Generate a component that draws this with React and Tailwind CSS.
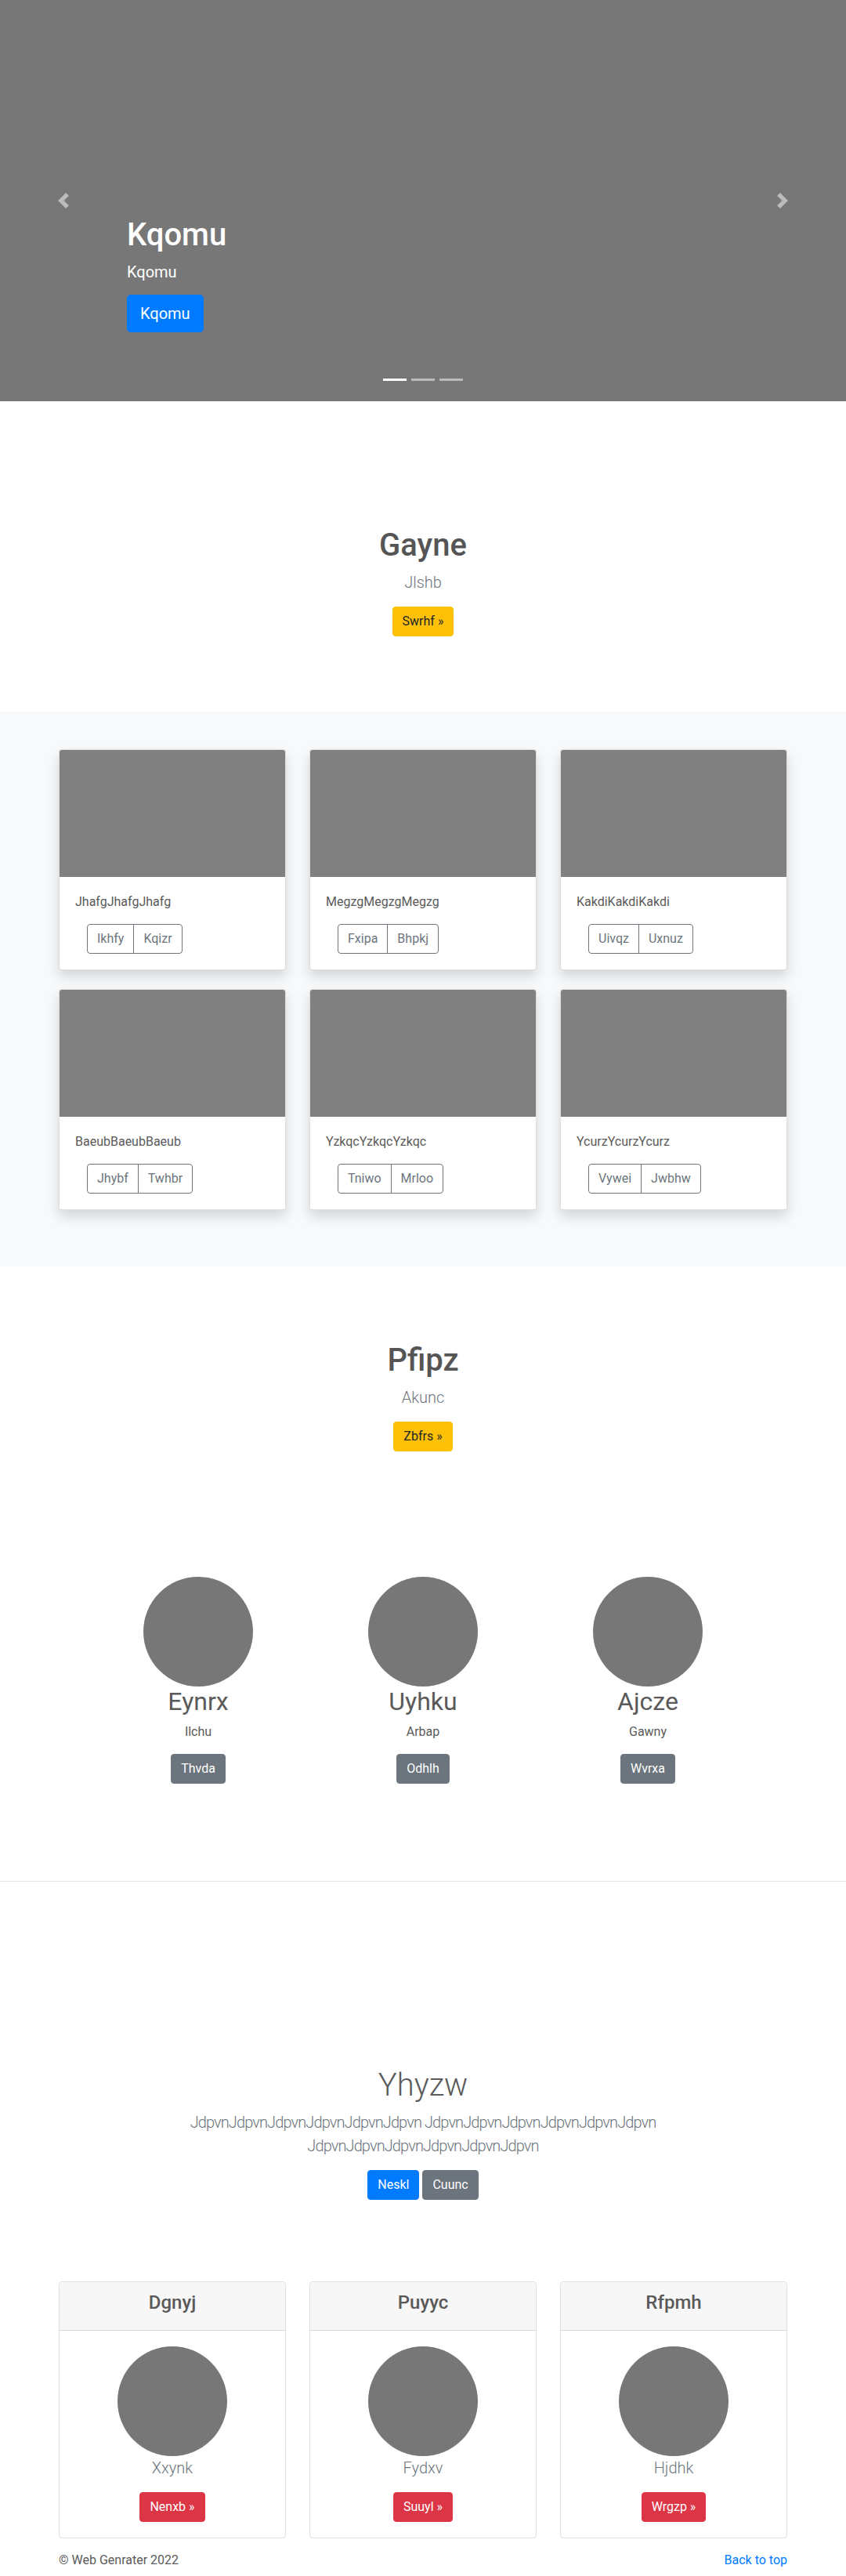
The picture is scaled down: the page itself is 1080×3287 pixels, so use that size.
import React from "react";

const font = "font-['Roboto','Segoe_UI',Arial,sans-serif]";

const albumCards = [
  { text: "JhafgJhafgJhafg", a: "Ikhfy", b: "Kqizr" },
  { text: "MegzgMegzgMegzg", a: "Fxipa", b: "Bhpkj" },
  { text: "KakdiKakdiKakdi", a: "Uivqz", b: "Uxnuz" },
  { text: "BaeubBaeubBaeub", a: "Jhybf", b: "Twhbr" },
  { text: "YzkqcYzkqcYzkqc", a: "Tniwo", b: "Mrloo" },
  { text: "YcurzYcurzYcurz", a: "Vywei", b: "Jwbhw" },
];

const team = [
  { name: "Eynrx", role: "Ilchu", btn: "Thvda" },
  { name: "Uyhku", role: "Arbap", btn: "Odhlh" },
  { name: "Ajcze", role: "Gawny", btn: "Wvrxa" },
];

const pricing = [
  { title: "Dgnyj", sub: "Xxynk", btn: "Nenxb »" },
  { title: "Puyyc", sub: "Fydxv", btn: "Suuyl »" },
  { title: "Rfpmh", sub: "Hjdhk", btn: "Wrgzp »" },
];

function Chevron({ dir }) {
  return (
    <svg width="20" height="20" viewBox="0 0 8 8" fill="#fff">
      {dir === "prev" ? (
        <path d="M5.25 0l-4 4 4 4 1.5-1.5L4.25 4l2.5-2.5L5.25 0z" />
      ) : (
        <path d="M2.75 0l-1.5 1.5L3.75 4l-2.5 2.5L2.75 8l4-4-4-4z" />
      )}
    </svg>
  );
}

function Hero() {
  return (
    <div className="relative h-[512px] bg-[#777777] flex flex-col justify-end pl-[162px] pb-[88px] text-white">
      {/* prev / next controls sit over the slide */}
      <div className="absolute left-0 top-0 h-full w-[15%] flex items-center justify-center opacity-50">
        <Chevron dir="prev" />
      </div>
      <div className="absolute right-0 top-0 h-full w-[15%] flex items-center justify-center opacity-50">
        <Chevron dir="next" />
      </div>

      <h1 className="text-[40px] leading-[48px] font-medium mb-2">Kqomu</h1>
      <p className="text-[20px] leading-[30px] mb-[14px]">Kqomu</p>
      <div>
        <a className="inline-block bg-[#007bff] text-white text-[20px] leading-[30px] px-4 py-2 rounded-[4.8px] border border-[#007bff]">
          Kqomu
        </a>
      </div>

      {/* indicators */}
      <div className="absolute bottom-[26px] left-0 right-0 flex justify-center gap-[6px]">
        <span className="w-[30px] h-[3px] bg-white"></span>
        <span className="w-[30px] h-[3px] bg-white opacity-50"></span>
        <span className="w-[30px] h-[3px] bg-white opacity-50"></span>
      </div>
    </div>
  );
}

function Jumbo({ title, lead, btn }) {
  return (
    <section className="pt-[96px] pb-[96px] text-center">
      <h1 className="text-[40px] leading-[48px] font-medium text-[#555555] mb-2">{title}</h1>
      <p className="text-[20px] leading-[30px] font-light text-[#6c757d] mb-4">{lead}</p>
      <a className="inline-block bg-[#ffc107] border border-[#ffc107] text-[#212529] text-base leading-6 px-3 py-[6px] rounded">
        {btn}
      </a>
    </section>
  );
}

function AlbumCard({ text, a, b }) {
  return (
    <div className="bg-white border border-black/[0.125] rounded overflow-hidden shadow-[0_0.5rem_1rem_rgba(0,0,0,0.15)]">
      <div className="h-[162px] bg-[#808080]"></div>
      <div className="p-5">
        <p className="text-base leading-6 text-[#5a5a5a] mb-4">{text}</p>
        <div className="flex ml-[15px]">
          <span className="border border-[#6c757d] text-[#6c757d] text-base leading-6 px-3 py-[6px] rounded-l">
            {a}
          </span>
          <span className="-ml-px border border-[#6c757d] text-[#6c757d] text-base leading-6 px-3 py-[6px] rounded-r">
            {b}
          </span>
        </div>
      </div>
    </div>
  );
}

export default function App() {
  return (
    <div className={`${font} bg-white text-[#5a5a5a]`}>
      <Hero />

      <div className="mt-16">
        <Jumbo title="Gayne" lead="Jlshb" btn="Swrhf »" />
      </div>

      {/* album */}
      <section className="bg-[#f8f9fa] pt-12 pb-[72px]">
        <div className="w-[930px] mx-auto grid grid-cols-3 gap-x-[30px] gap-y-6">
          {albumCards.map((c) => (
            <AlbumCard key={c.text} {...c} />
          ))}
        </div>
      </section>

      <Jumbo title="Pfipz" lead="Akunc" btn="Zbfrs »" />

      {/* team */}
      <section className="pt-16">
        <div className="w-[861px] mx-auto grid grid-cols-3">
          {team.map((t) => (
            <div key={t.name} className="flex flex-col items-center text-center">
              <div className="w-[140px] h-[140px] rounded-full bg-[#777777]"></div>
              <h2 className="text-[32px] leading-[38px] font-normal text-[#5a5a5a] mb-2">{t.name}</h2>
              <p className="text-base leading-6 text-[#5a5a5a] mb-4">{t.role}</p>
              <a className="inline-block bg-[#6c757d] border border-[#6c757d] text-white text-base leading-6 px-3 py-[6px] rounded">
                {t.btn}
              </a>
            </div>
          ))}
        </div>
        <hr className="mt-[124px] border-0 border-t border-black/10" />
      </section>

      {/* call to action */}
      <section className="pt-[236px] text-center">
        <h1 className="text-[40px] leading-[48px] font-light text-[#5a5a5a] mb-2">Yhyzw</h1>
        <p className="max-w-[680px] mx-auto text-[20px] leading-[30px] font-light tracking-[-0.9px] text-[#6c757d] mb-4">
          JdpvnJdpvnJdpvnJdpvnJdpvnJdpvn JdpvnJdpvnJdpvnJdpvnJdpvnJdpvn JdpvnJdpvnJdpvnJdpvnJdpvnJdpvn
        </p>
        <div className="flex justify-center gap-1 my-2">
          <a className="inline-block bg-[#007bff] border border-[#007bff] text-white text-base leading-6 px-3 py-[6px] rounded">
            Neskl
          </a>
          <a className="inline-block bg-[#6c757d] border border-[#6c757d] text-white text-base leading-6 px-3 py-[6px] rounded">
            Cuunc
          </a>
        </div>
      </section>

      {/* header cards */}
      <section className="pt-[96px]">
        <div className="w-[930px] mx-auto grid grid-cols-3 gap-x-[30px]">
          {pricing.map((p) => (
            <div key={p.title} className="border border-black/[0.125] rounded overflow-hidden text-center">
              <div className="bg-[#f7f7f7] border-b border-black/[0.125] px-5 pt-3 pb-5">
                <h4 className="text-[24px] leading-[29px] font-medium text-[#5a5a5a]">{p.title}</h4>
              </div>
              <div className="p-5 flex flex-col items-center">
                <div className="w-[140px] h-[140px] rounded-full bg-[#777777]"></div>
                <p className="text-[20px] leading-[30px] font-light text-[#6c757d] mb-4">{p.sub}</p>
                <a className="inline-block bg-[#dc3545] border border-[#dc3545] text-white text-base leading-6 px-3 py-[6px] rounded">
                  {p.btn}
                </a>
              </div>
            </div>
          ))}
        </div>
      </section>

      <footer className="w-[930px] mx-auto mt-4 flex justify-between text-base leading-6">
        <p className="text-[#5a5a5a]">© Web Genrater 2022</p>
        <a className="text-[#007bff]">Back to top</a>
      </footer>
    </div>
  );
}
